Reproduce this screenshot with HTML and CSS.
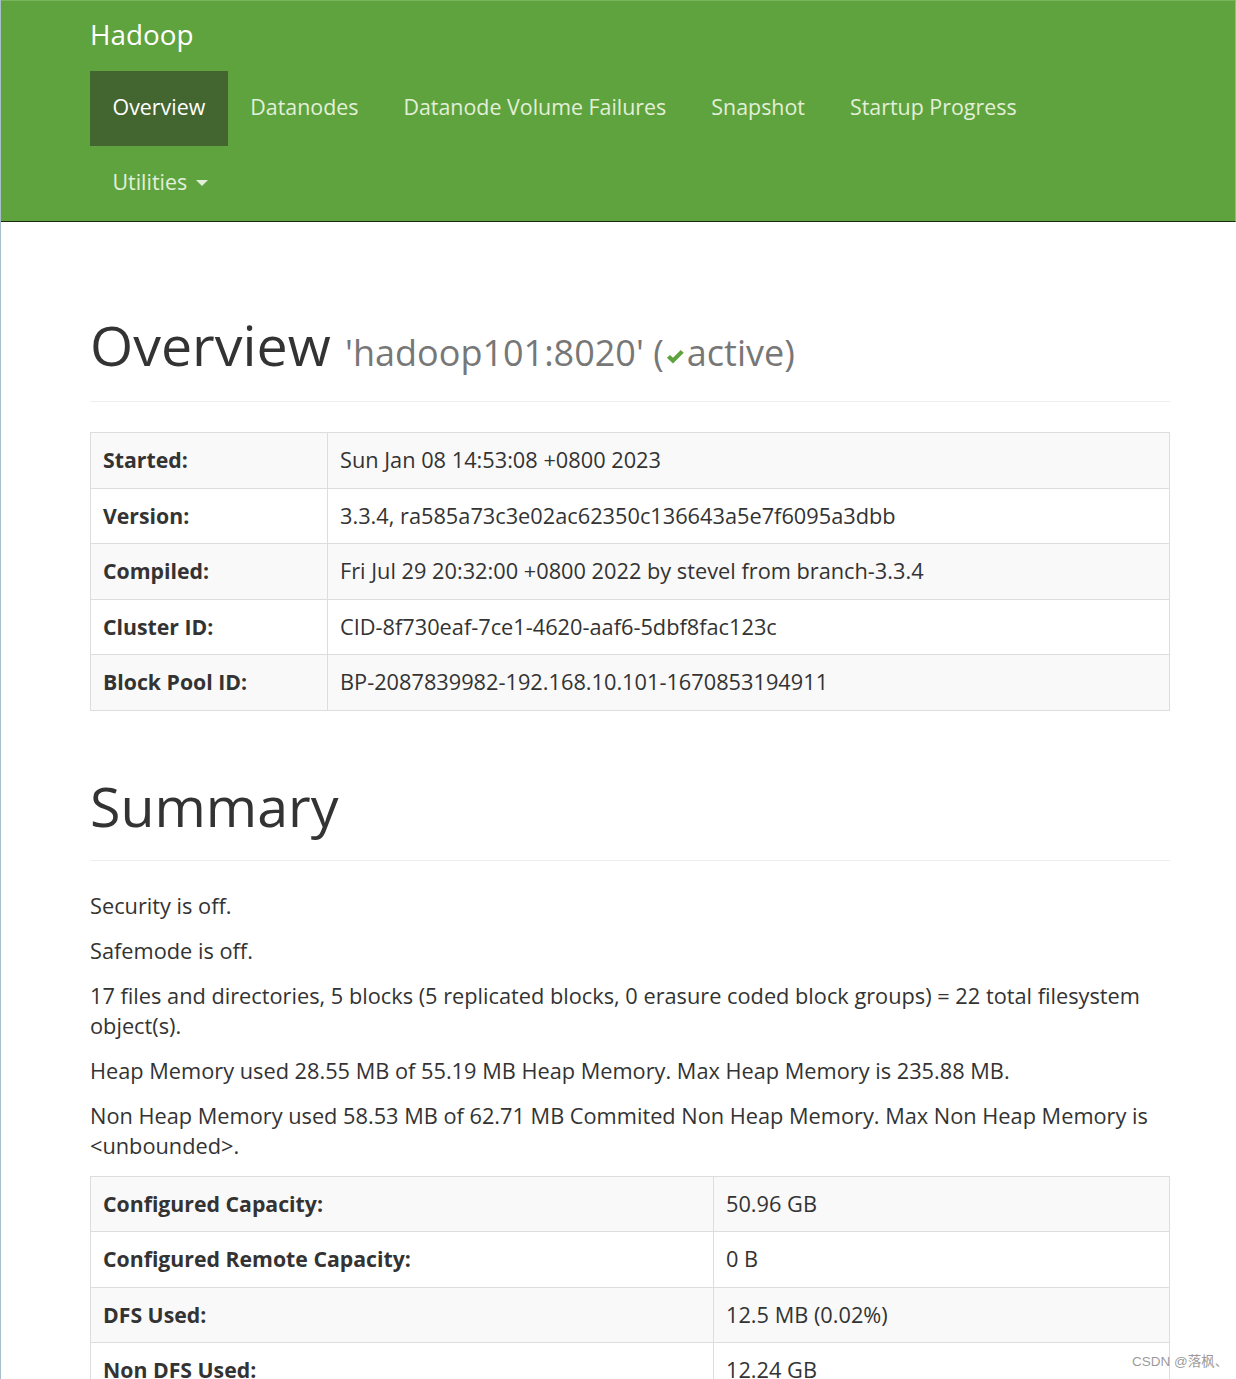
FILE: index.html
```html
<!DOCTYPE html>
<html lang="en">
<head>
<meta charset="utf-8">
<title>Namenode information</title>
<link rel="stylesheet" href="styles.css">
</head>
<body>
<header class="navbar">
  <div class="navbar-inner">
    <div class="brand">Hadoop</div>
    <ul class="nav">
      <li class="active"><a href="#">Overview</a></li>
      <li><a href="#">Datanodes</a></li>
      <li><a href="#">Datanode Volume Failures</a></li>
      <li><a href="#">Snapshot</a></li>
      <li><a href="#">Startup Progress</a></li>
      <li class="dropdown"><a href="#">Utilities <span class="caret"></span></a></li>
    </ul>
  </div>
</header>

<main class="container">
  <div class="page-header first">
    <h1>Overview <small>'hadoop101:8020' (<svg class="ok" viewBox="0 0 16 16" width="20" height="20" aria-hidden="true"><path d="M1.5 8.6 L4 6.3 L6.4 8.6 L12.6 2.3 L15 4.6 L6.4 13.2 Z" fill="#5fa33e"/></svg>active)</small></h1>
  </div>

  <table class="table info">
    <tr><th>Started:</th><td>Sun Jan 08 14:53:08 +0800 2023</td></tr>
    <tr><th>Version:</th><td>3.3.4, ra585a73c3e02ac62350c136643a5e7f6095a3dbb</td></tr>
    <tr><th>Compiled:</th><td>Fri Jul 29 20:32:00 +0800 2022 by stevel from branch-3.3.4</td></tr>
    <tr><th>Cluster ID:</th><td>CID-8f730eaf-7ce1-4620-aaf6-5dbf8fac123c</td></tr>
    <tr><th>Block Pool ID:</th><td>BP-2087839982-192.168.10.101-1670853194911</td></tr>
  </table>

  <div class="page-header">
    <h1>Summary</h1>
  </div>

  <p>Security is off.</p>
  <p>Safemode is off.</p>
  <p>17 files and directories, 5 blocks (5 replicated blocks, 0 erasure coded block groups) = 22 total filesystem object(s).</p>
  <p>Heap Memory used 28.55 MB of 55.19 MB Heap Memory. Max Heap Memory is 235.88 MB.</p>
  <p>Non Heap Memory used 58.53 MB of 62.71 MB Commited Non Heap Memory. Max Non Heap Memory is &lt;unbounded&gt;.</p>

  <table class="table summary">
    <tr><th>Configured Capacity:</th><td>50.96 GB</td></tr>
    <tr><th>Configured Remote Capacity:</th><td>0 B</td></tr>
    <tr><th>DFS Used:</th><td>12.5 MB (0.02%)</td></tr>
    <tr><th>Non DFS Used:</th><td>12.24 GB</td></tr>
  </table>
</main>

<div class="watermark">CSDN @落枫、</div>
</body>
</html>
```

FILE: styles.css
```css
html, body {
  margin: 0;
  padding: 0;
}

body {
  font-family: "Open Sans", "Noto Sans", "Noto Sans CJK SC", sans-serif;
  font-size: 21.75px;
  line-height: 30px;
  color: #333;
  background: #fff;
  border-left: 1px solid #a7bfcb;
  min-height: 1379px;
  box-sizing: border-box;
  position: relative;
  overflow: hidden;
}

.navbar {
  background: #5fa33e;
  border-top: 1px solid #79b55c;
  border-bottom: 1px solid #1b2a12;
  border-right: 1px solid #8cc57a;
  margin-left: -1px;
  border-left: 1px solid #1c1c1c;
  height: 222px;
  box-sizing: border-box;
  margin-bottom: 29px;
}

.navbar-inner {
  margin-left: 89px;
  width: 1080px;
}

.brand {
  height: 70px;
  display: flex;
  align-items: center;
  padding-left: 0;
  font-size: 27.8px;
  color: #fff;
  padding-bottom: 4px;
  box-sizing: border-box;
}

.nav {
  list-style: none;
  margin: 0;
  padding: 0;
  display: flex;
  flex-wrap: wrap;
}

.nav .dropdown {
  flex-basis: 100%;
}

.nav a {
  display: inline-flex;
  align-items: center;
  height: 75px;
  padding: 0 22.5px 3px;
  box-sizing: border-box;
  color: #e2efd9;
  text-decoration: none;
  font-size: 21.4px;
}

.nav .active a {
  background: #43652f;
  color: #fff;
}

.caret {
  display: inline-block;
  width: 0;
  height: 0;
  margin-left: 9px;
  margin-top: 2px;
  border-top: 6px solid #e2efd9;
  border-left: 6px solid transparent;
  border-right: 6px solid transparent;
}

.container {
  margin-left: 89px;
  width: 1080px;
}

.page-header {
  margin: 65px 0 30px;
  padding-bottom: 13px;
  border-bottom: 1px solid #eee;
}

.page-header.first {
  margin-top: 93px;
}

.page-header h1 {
  margin: 0 0 12px;
  font-size: 55.5px;
  line-height: 59px;
  font-weight: 400;
  color: #333;
}

.page-header.first h1 {
  margin-bottom: 14px;
}

.page-header h1 small {
  font-size: 36px;
  line-height: 1;
  color: #777;
  font-weight: 400;
}

.ok {
  vertical-align: -1px;
  margin: 0 2px 0 1px;
}

.table {
  width: 100%;
  border-collapse: collapse;
  margin-bottom: 30px;
  border: 1px solid #ddd;
}

.table th,
.table td {
  padding: 12px;
  line-height: 30.5px;
  text-align: left;
  vertical-align: top;
  border: 1px solid #ddd;
}

.table th {
  font-weight: 700;
  font-size: 21.25px;
}

.table tr:nth-child(odd) {
  background: #f9f9f9;
}

.info th {
  width: 212px;
}

.summary th {
  width: 598px;
}

p {
  margin: 0 0 15px;
}

.watermark {
  position: absolute;
  left: 1131px;
  top: 1352px;
  font-family: "Liberation Sans", "Noto Sans CJK SC", sans-serif;
  font-size: 13.5px;
  line-height: 20px;
  color: rgba(120, 120, 120, 0.75);
  white-space: nowrap;
}
```
